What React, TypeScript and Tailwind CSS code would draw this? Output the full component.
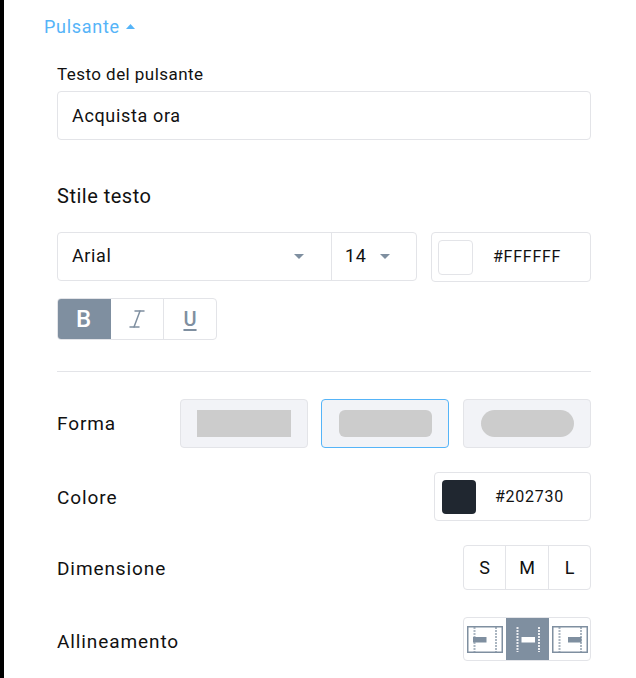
import React from "react";
import { Italic } from "lucide-react";

const Caret = ({ className }: { className: string }) => (
  <svg width="10" height="5" viewBox="0 0 10 5" className={className}>
    <path d="M0 0h10L5 5z" fill="currentColor" />
  </svg>
);

const Align = ({ pos, active }: { pos: "l" | "c" | "r"; active?: boolean }) => {
  const c = active ? "#ffffff" : "#7f8fa0";
  const x = pos === "l" ? 6 : pos === "c" ? 11.5 : 16;
  return (
    <svg width="36" height="27" viewBox="0 0 36 27">
      {!active && <rect x="0.75" y="0.75" width="34.5" height="25.5" fill="none" stroke={c} strokeWidth="1.5" />}
      <line x1="7.5" y1="1" x2="7.5" y2="26" stroke={c} strokeWidth="2" strokeDasharray="2 1" opacity={active ? 0.85 : 0.65} />
      <line x1="29" y1="1" x2="29" y2="26" stroke={c} strokeWidth="2" strokeDasharray="2 1" opacity={active ? 0.85 : 0.65} />
      <rect x={x} y="11" width="13.5" height="5.5" fill={c} />
    </svg>
  );
};

const Shape = ({ radius, selected, className = "" }: { radius: string; selected?: boolean; className?: string }) => (
  <div className={`w-[128px] h-[49px] rounded-[4px] border bg-[#f2f3f7] flex items-center justify-center ${selected ? "border-[#55b4f8]" : "border-[#e3e4e8]"} ${className}`}>
    <div className={`h-[27px] bg-[#cccccc] ${radius}`} />
  </div>
);

const Row = ({ label, children, className, labelClass = "" }: { label: string; children: React.ReactNode; className: string; labelClass?: string }) => (
  <div className={`flex items-center justify-between ${className}`}>
    <span className={`text-[19px] leading-[26px] tracking-[0.9px] text-[#111] ${labelClass}`}>{label}</span>
    {children}
  </div>
);

export default function App() {
  return (
    <div className="w-[636px] h-[678px] overflow-hidden bg-white flex font-['Roboto',sans-serif] text-[#111]">
      <div className="w-[4px] bg-black shrink-0" />
      <div className="pl-[40px] flex-1">
        <div className="h-[52px] flex items-center gap-[6px] text-[#55b4f8] text-[18px] tracking-[0.7px]">
          Pulsante
          <svg width="9" height="5" viewBox="0 0 9 5" className="mt-[1px]"><path d="M0 5h9L4.5 0z" fill="currentColor" /></svg>
        </div>
        <div className="pl-[13px] w-[547px]">
          <div className="text-[17px] leading-[20px] tracking-[0.45px] mt-[12px]">Testo del pulsante</div>
          <div className="mt-[7px] h-[49px] border border-[#e3e4e8] rounded-[4px] flex items-center pl-[14px] text-[18px] tracking-[0.65px]">Acquista ora</div>
          <div className="mt-[43px] text-[20px] leading-[26px] tracking-[0.5px]">Stile testo</div>
          <div className="mt-[23px] flex justify-between">
            <div className="w-[360px] h-[49px] border border-[#e3e4e8] rounded-[4px] flex">
              <div className="flex-1 flex items-center justify-between pl-[14px] pr-[27px] text-[18px] tracking-[0.6px]">
                <span className="pb-[2px]">Arial</span>
                <Caret className="text-[#7f8fa0]" />
              </div>
              <div className="w-[85px] border-l border-[#e3e4e8] flex items-center pl-[13px] gap-[14px] text-[18px] tracking-[0.6px]">
                <span className="pb-[2px]">14</span>
                <Caret className="text-[#7f8fa0]" />
              </div>
            </div>
            <div className="w-[160px] h-[50px] border border-[#e3e4e8] rounded-[4px] flex items-center pl-[6px] gap-[20px]">
              <div className="w-[35px] h-[35px] border border-[#e3e4e8] rounded-[4px] bg-white" />
              <span className="text-[16px] tracking-[0.75px]">#FFFFFF</span>
            </div>
          </div>
          <div className="mt-[16px] w-[160px] h-[42px] border border-[#e3e4e8] rounded-[4px] overflow-hidden flex text-[#7f8fa0]">
            <div className="w-[53px] bg-[#7f8fa0] text-white flex items-center justify-center text-[24px] font-medium pr-[2px]">B</div>
            <div className="w-[53px] border-r border-[#e3e4e8] flex items-center justify-center">
              <Italic size={24} strokeWidth={1.5} />
            </div>
            <div className="flex-1 flex items-center justify-center text-[20px] font-medium underline underline-offset-[3px]">U</div>
          </div>
          <div className="mt-[31px] h-px bg-[#e3e4e8]" />
          <Row label="Forma" className="mt-[27px]">
            <div className="flex gap-[14px]">
              <Shape radius="w-[94px]" className="-mr-px" />
              <Shape radius="w-[93px] rounded-[6px]" selected />
              <Shape radius="w-[93px] rounded-full" />
            </div>
          </Row>
          <Row label="Colore" className="mt-[24px]" labelClass="pt-[2px]">
            <div className="w-[157px] h-[49px] border border-[#e3e4e8] rounded-[4px] flex items-center pl-[7px] gap-[19px]">
              <div className="w-[34px] h-[34px] rounded-[4px] bg-[#202730]" />
              <span className="text-[16px] tracking-[0.75px]">#202730</span>
            </div>
          </Row>
          <Row label="Dimensione" className="mt-[24px]" labelClass="pt-[2px]">
            <div className="w-[128px] h-[45px] border border-[#e3e4e8] rounded-[4px] flex text-[18px]">
              <div className="w-[42px] border-r border-[#e3e4e8] flex items-center justify-center">S</div>
              <div className="w-[43px] border-r border-[#e3e4e8] flex items-center justify-center">M</div>
              <div className="flex-1 flex items-center justify-center">L</div>
            </div>
          </Row>
          <Row label="Allineamento" className="mt-[27px]" labelClass="pt-[5px]">
            <div className="w-[128px] h-[44px] border border-[#e3e4e8] rounded-[4px] overflow-hidden flex">
              <div className="w-[42px] flex items-center justify-center"><Align pos="l" /></div>
              <div className="w-[43px] bg-[#7f8fa0] flex items-center justify-center"><Align pos="c" active /></div>
              <div className="flex-1 flex items-center justify-center"><Align pos="r" /></div>
            </div>
          </Row>
        </div>
      </div>
    </div>
  );
}
